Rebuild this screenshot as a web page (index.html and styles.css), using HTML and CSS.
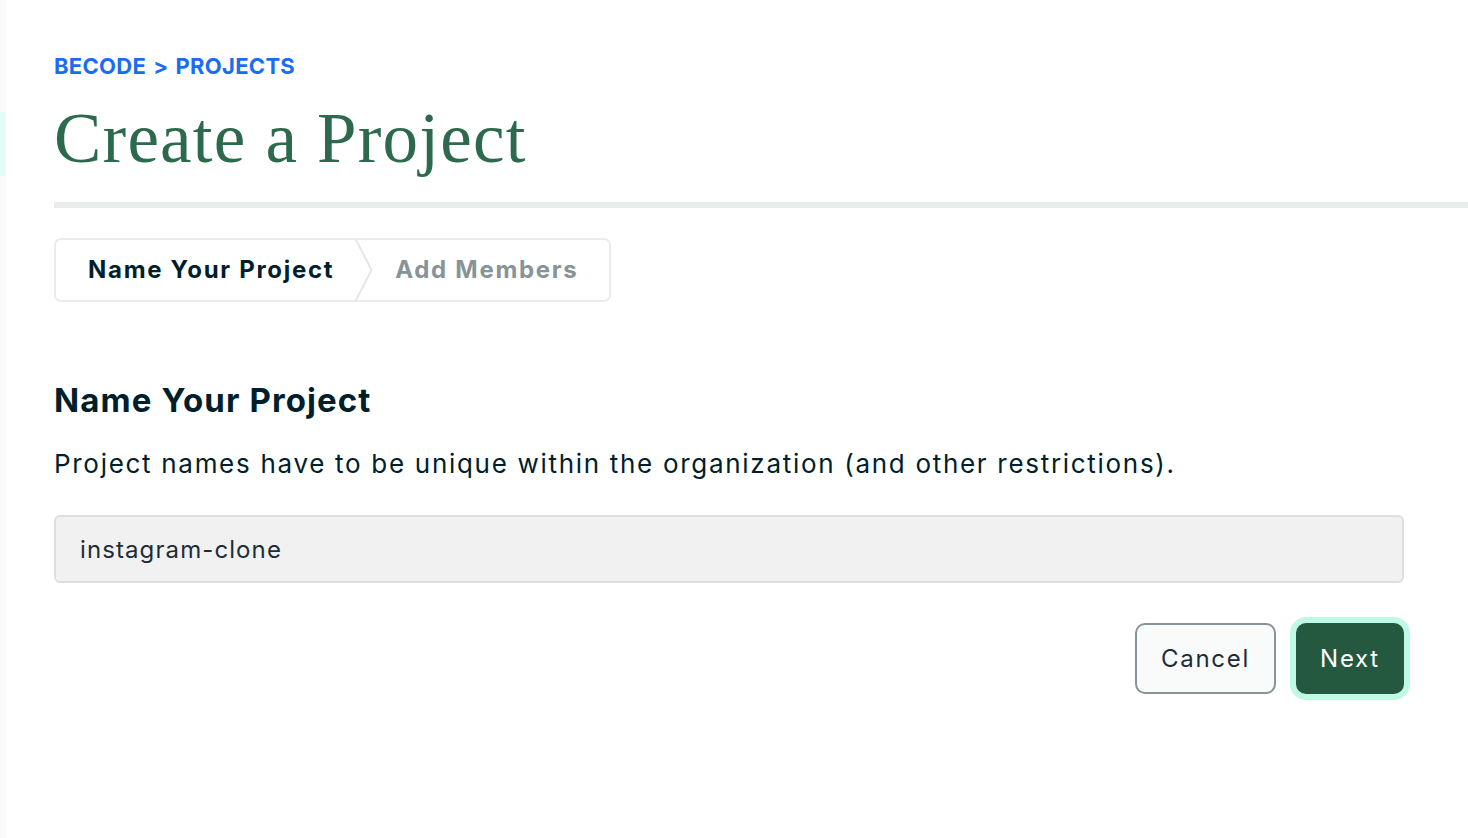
FILE: index.html
```html
<!DOCTYPE html>
<html lang="en">
<head>
<meta charset="utf-8">
<title>Create a Project</title>
<link rel="stylesheet" href="styles.css">
</head>
<body>
<div class="app">
  <aside class="rail"><div class="rail-active"></div></aside>
  <main class="page">
    <header class="page-header">
      <nav class="crumbs"><span>BECODE</span><span class="crumb-sep">&gt;</span><span>PROJECTS</span></nav>
      <h1 class="title">Create a Project</h1>
    </header>
    <div class="rule"></div>
    <div class="steps">
      <div class="step step-current">Name Your Project</div>
      <svg class="step-chevron" width="20" height="64" viewBox="0 0 20 64" aria-hidden="true"><polyline points="1,0 17.5,32 1,64" fill="none" stroke="#e3e8e6" stroke-width="2"/></svg>
      <div class="step step-next">Add Members</div>
    </div>
    <section class="form">
      <h2 class="form-title">Name Your Project</h2>
      <p class="form-desc">Project names have to be unique within the organization (and other restrictions).</p>
      <div class="field">instagram-clone</div>
      <div class="actions">
        <button class="btn btn-cancel" type="button">Cancel</button>
        <button class="btn btn-next" type="button">Next</button>
      </div>
    </section>
  </main>
</div>
</body>
</html>
```

FILE: styles.css
```css
* { box-sizing: border-box; }
html, body { margin: 0; padding: 0; background: #ffffff; }
body {
  font-family: "Inter", "Noto Sans", "Liberation Sans", sans-serif;
  color: #001e2b;
  height: 838px;
  overflow: hidden;
}
.app { display: flex; height: 838px; }
.rail {
  width: 6px;
  flex: none;
  background: #f9fbfa;
  padding-top: 112px;
}
.rail-active { height: 64px; background: #e3fcf7; }
.page { flex: 1; padding-left: 48px; }
.page-header { padding-top: 52px; }
.crumbs {
  display: flex;
  gap: 7px;
  color: #1a6cf0;
  font-weight: 700;
  font-size: 22px;
  line-height: 28px;
  letter-spacing: 0.3px;
}
.crumb-sep { font-weight: 700; }
.title {
  margin: 18px 0 0;
  font-family: "Liberation Serif", "DejaVu Serif", serif;
  font-weight: 400;
  font-size: 71px;
  line-height: 80px;
  letter-spacing: 1.2px;
  color: #2d6a4d;
}
.rule { height: 6px; background: #e8edeb; margin-top: 24px; }
.steps {
  margin-top: 30px;
  display: inline-flex;
  align-items: center;
  height: 64px;
  border: 2px solid #e8edeb;
  border-radius: 7px;
  overflow: hidden;
}
.step {
  font-size: 24px;
  font-weight: 700;
  line-height: 30px;
  letter-spacing: 1.7px;
}
.step-current { color: #001e2b; padding: 0 20px 0 32px; }
.step-next { color: #889397; padding: 0 31px 0 21px; }
.step-chevron { flex: none; display: block; }
.form { margin-right: 64px; padding-top: 78px; }
.form-title {
  margin: 0;
  font-size: 33px;
  font-weight: 700;
  line-height: 40px;
  letter-spacing: 1.1px;
  color: #001e2b;
}
.form-desc {
  margin: 27px 0 0;
  font-size: 26px;
  line-height: 34px;
  letter-spacing: 1.7px;
  color: #001e2b;
}
.field {
  margin-top: 34px;
  height: 68px;
  background: #f1f1f1;
  border: 2px solid #dedede;
  border-radius: 6px;
  padding: 0 24px;
  display: flex;
  align-items: center;
  font-size: 24px;
  letter-spacing: 1.1px;
  color: #1c2d38;
}
.actions {
  display: flex;
  justify-content: flex-end;
  gap: 20px;
  margin-top: 40px;
}
.btn {
  font-family: inherit;
  font-size: 24px;
  letter-spacing: 1.7px;
  height: 71px;
  border-radius: 10px;
  cursor: pointer;
}
.btn-cancel {
  width: 141px;
  background: #f9fbfa;
  border: 2px solid #889397;
  color: #1c2d38;
}
.btn-next {
  width: 108px;
  background: #24593f;
  border: 2px solid #24593f;
  color: #ffffff;
  box-shadow: 0 0 0 6px #c0fae6;
}
```
